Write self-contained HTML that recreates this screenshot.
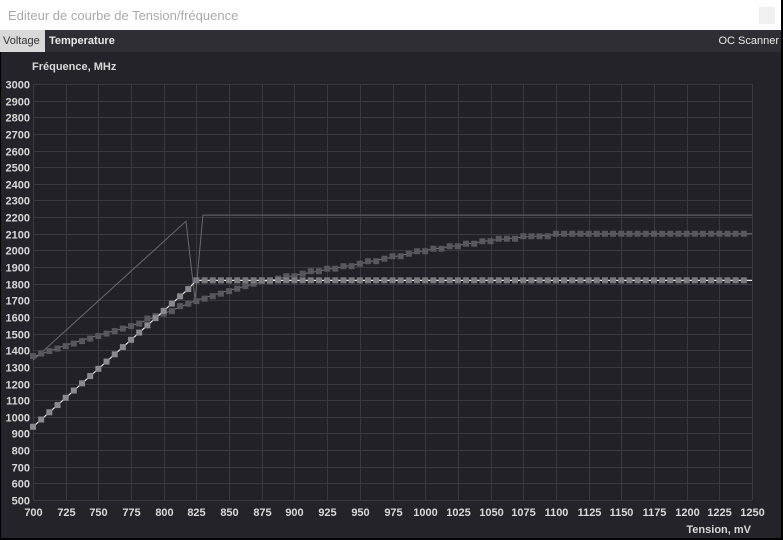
<!DOCTYPE html>
<html><head><meta charset="utf-8"><style>
*{margin:0;padding:0;box-sizing:border-box}
body{width:783px;height:540px;overflow:hidden;background:#000;font-family:"Liberation Sans",sans-serif;position:relative}
#title{position:absolute;left:0;top:0;width:781px;height:30px;background:#fff;color:#a9a9a9;font-size:13px;padding:8px 0 0 8px}
#btn{position:absolute;right:8px;top:7px;width:16px;height:17px;background:#f0f0f0}
#tabs{position:absolute;left:0;top:30px;width:781px;height:22px;background:#2f2e34;font-size:11px;font-weight:bold;color:#e8e8e8}
#tv{position:absolute;left:0;top:0;height:22px;width:45px;background:#d9d9d9;color:#333;font-weight:normal;padding:5px 0 0 3px}
#tt{position:absolute;left:49px;top:5px}
#oc{position:absolute;right:2px;top:5px;font-weight:normal}
#main{position:absolute;left:1px;top:52px;width:780px;height:486px;background:#242329}
svg{position:absolute;left:0;top:0}
</style></head><body>
<div id="title">Editeur de courbe de Tension/fréquence</div><div id="btn"></div>
<div id="tabs"><div id="tv">Voltage</div><div id="tt">Temperature</div><div id="oc">OC Scanner</div></div>
<div id="main"></div>
<svg id="s" width="783" height="540" xmlns="http://www.w3.org/2000/svg" font-family="Liberation Sans, sans-serif" font-size="11" font-weight="bold" fill="#d8d8d8">
<rect x="33" y="84" width="719" height="416" fill="#222127"/>
<text x="32" y="70">Fréquence, MHz</text>
<text x="751" y="533" text-anchor="end">Tension, mV</text>
<g id="grid" stroke="#3a393f" stroke-width="1"></g>
<g id="labels"></g>
<g id="curves"></g>
</svg>
<script>
var NS="http://www.w3.org/2000/svg";
function X(v){return 33+(v-700)*719/550}
function Y(f){return 84+(3000-f)*416/2500}
function el(p,t,a,txt){var e=document.createElementNS(NS,t);for(var k in a)e.setAttribute(k,a[k]);if(txt)e.textContent=txt;document.getElementById(p).appendChild(e);return e}
for(var f=500;f<=3000;f+=100){var y=Math.round(Y(f))+.5;el("grid","line",{x1:33,x2:752,y1:y,y2:y});el("labels","text",{x:30,y:y+4,"text-anchor":"end"},f)}
for(var v=700;v<=1250;v+=25){var x=Math.round(X(v))+.5;el("grid","line",{x1:x,x2:x,y1:84,y2:500});el("labels","text",{x:x,y:516,"text-anchor":"middle"},v)}
// thin line
el("curves","polyline",{points:[X(700),Y(1340),X(817),Y(2175),X(824),Y(1700),X(830),Y(2212),X(1250),Y(2212)].join(" "),fill:"none",stroke:"#6a696e","stroke-width":1});
// dark curve
var kp=[[700,1360],[725,1430],[750,1490],[775,1545],[800,1620],[825,1700],[850,1760],[875,1810],[900,1850],[925,1885],[950,1920],[975,1960],[1000,2000],[1025,2030],[1050,2060],[1075,2080],[1100,2095],[1125,2100],[1250,2100]];
function interp(v){for(var i=0;i<kp.length-1;i++){if(v<=kp[i+1][0]){var t=(v-kp[i][0])/(kp[i+1][0]-kp[i][0]);return kp[i][1]+t*(kp[i+1][1]-kp[i][1])}}return 2100}
var pts=[];for(var v=700;v<=1250;v+=6.25){pts.push(X(v)+","+Y(interp(v)))}
el("curves","polyline",{points:pts.join(" "),fill:"none",stroke:"#77767b","stroke-width":1});
for(var v=700;v<=1245;v+=6.25){var f=Math.round(interp(v)/15)*15;el("curves","rect",{x:X(v)-3,y:Y(f)-3,width:6,height:6,fill:"#58575d"})}
// light curve
function g(v){return v<=822?940+(v-700)*(1790-940)/122:1820}
var p2=[];for(var v=700;v<=1250;v+=6.25){p2.push(X(v)+","+Y(g(v)))}
el("curves","polyline",{points:p2.join(" "),fill:"none",stroke:"#e8e8e8","stroke-width":1.2});
for(var v=700;v<=1245;v+=6.25){el("curves","rect",{x:X(v)-3,y:Y(g(v))-3,width:6,height:6,fill:v<=822?"#8a898e":"#7c7b80"})}
</script>
</body></html>
